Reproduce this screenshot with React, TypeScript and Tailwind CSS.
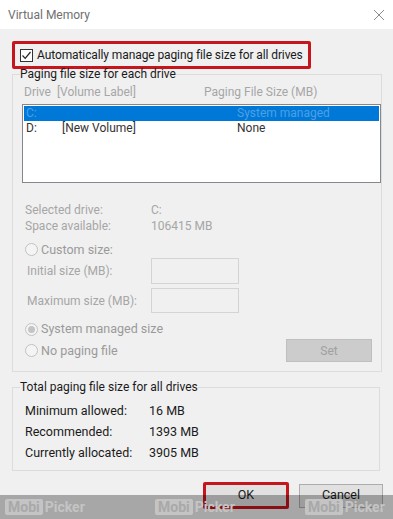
import React from "react";

const Radio = ({ checked = false }: { checked?: boolean }) => (
  <span className="w-[13px] h-[13px] rounded-full border border-[#c2c2c2] bg-[#f4f4f4] flex items-center justify-center shrink-0">
    {checked && <span className="w-[7px] h-[7px] rounded-full bg-[#c4c4c4]" />}
  </span>
);

const Logo = () => (
  <div className="w-[150px] shrink-0 flex items-center whitespace-nowrap">
    <span className="bg-[#c4c4c4] text-[#a9a9a9] font-bold text-[14px] leading-[16px] px-[3px] rounded-[2px]">Mobi</span>
    <span className="text-[#c4c4c4] font-bold text-[14px] leading-[16px] ml-[2px]">Picker</span>
  </div>
);

export default function App() {
  return (
    <div
      className="relative w-[393px] h-[519px] bg-[#f0f0f0] overflow-hidden text-[12px] text-[#1a1a1a]"
      style={{ fontFamily: 'Roboto, "Noto Sans", sans-serif' }}
    >
      {/* Title bar */}
      <div className="h-[29px] bg-white flex items-center justify-between pl-[8px] pr-[7px]">
        <span className="text-[12px] text-[#707070]">Virtual Memory</span>
        <svg width="14" height="14" viewBox="0 0 14 14">
          <path d="M2 2 L12 12 M12 2 L2 12" stroke="#8a8a8a" strokeWidth="1" fill="none" />
        </svg>
      </div>

      {/* Red highlighted checkbox */}
      <div className="mt-[12px] ml-[12px] w-[299px] h-[28px] border-[3px] border-[#c5161d] rounded-[2px] flex items-center pl-[5px]">
        <span className="w-[13px] h-[13px] border border-[#333] bg-white flex items-center justify-center shrink-0">
          <svg width="11" height="11" viewBox="0 0 11 11">
            <path d="M1.5 5.5 L4.2 8.3 L9.5 2" stroke="#222" strokeWidth="1.2" fill="none" />
          </svg>
        </span>
        <span className="ml-[4px] text-[12px] tracking-[-0.1px] leading-[16px] whitespace-nowrap">
          Automatically manage paging file size for all drives
        </span>
      </div>

      {/* Group 1 */}
      <fieldset className="-mt-[2px] ml-[12px] w-[368px] h-[305px] border border-[#dcdcdc] px-0">
        <legend className="ml-[7px] text-[12px] leading-[14px] px-0">Paging file size for each drive</legend>
        <div className="mt-[3px] h-[16px] leading-[16px] flex text-[#a6a6a6] pl-[11px]">
          <span className="w-[180px]">Drive&nbsp;&nbsp;[Volume Label]</span>
          <span>Paging File Size (MB)</span>
        </div>
        <div className="mt-[4px] ml-[9px] w-[359px] h-[79px] bg-white border border-[#828790] p-[1px]">
          <div className="h-[15px] bg-[#0078d7] flex items-center text-[#4da0e6] leading-[15px]">
            <span className="w-[213px] pl-[2px]">C:</span>
            <span>System managed</span>
          </div>
          <div className="h-[15px] flex items-center leading-[15px] text-[#333]">
            <span className="w-[38px] pl-[2px]">D:</span>
            <span className="w-[175px]">[New Volume]</span>
            <span>None</span>
          </div>
        </div>

        <div className="text-[#a6a6a6] pl-[12px]">
          <div className="mt-[19px] h-[16px] leading-[16px] flex">
            <span className="w-[126px]">Selected drive:</span>
            <span>C:</span>
          </div>
          <div className="h-[16px] leading-[16px] flex">
            <span className="w-[126px]">Space available:</span>
            <span>106415 MB</span>
          </div>
        </div>

        <div className="mt-[8px] pl-[12px] h-[15px] flex items-center gap-[3px] text-[12.5px] text-[#9a9a9a]">
          <Radio />
          <span className="leading-[15px]">Custom size:</span>
        </div>
        <div className="mt-[1px] pl-[14px] flex items-center text-[#a6a6a6]">
          <span className="w-[124px]">Initial size (MB):</span>
          <span className="w-[88px] h-[26px] border border-[#d4d4d4] bg-[#f0f0f0]" />
        </div>
        <div className="mt-[4px] pl-[14px] flex items-center text-[#a6a6a6]">
          <span className="w-[124px]">Maximum size (MB):</span>
          <span className="w-[88px] h-[25px] border border-[#d4d4d4] bg-[#f0f0f0]" />
        </div>

        <div className="mt-[8px] pl-[12px] h-[16px] flex items-center gap-[3px] text-[12.5px] text-[#9a9a9a]">
          <Radio checked />
          <span className="leading-[16px]">System managed size</span>
        </div>
        <div className="mt-[2px] pl-[12px] pr-[9px] flex items-center justify-between text-[12.5px] text-[#9a9a9a]">
          <div className="flex items-center gap-[3px]">
            <Radio />
            <span className="leading-[16px]">No paging file</span>
          </div>
          <div className="w-[86px] h-[23px] bg-[#cccccc] border border-[#bfbfbf] flex items-center justify-center text-[12px] text-[#a0a0a0]">
            Set
          </div>
        </div>
      </fieldset>

      {/* Group 2 */}
      <fieldset className="mt-[7px] ml-[12px] w-[368px] h-[92px] border border-[#dcdcdc] px-0">
        <legend className="ml-[7px] text-[12px] leading-[16px] px-0">Total paging file size for all drives</legend>
        <div className="pl-[12px] text-[12.5px] text-[#1a1a1a]">
          <div className="mt-[5px] h-[21px] leading-[21px] flex">
            <span className="w-[124px]">Minimum allowed:</span>
            <span>16 MB</span>
          </div>
          <div className="h-[21px] leading-[21px] flex">
            <span className="w-[124px]">Recommended:</span>
            <span>1393 MB</span>
          </div>
          <div className="h-[21px] leading-[21px] flex">
            <span className="w-[124px]">Currently allocated:</span>
            <span>3905 MB</span>
          </div>
        </div>
      </fieldset>

      {/* Buttons */}
      <div className="mt-[11px] flex items-center pl-[203px]">
        <div className="w-[86px] h-[27px] border-[3px] border-[#c5161d] rounded-[2px] bg-[#e1e1e1] flex items-center justify-center text-[12.5px]">
          OK
        </div>
        <div className="ml-[10px] w-[84px] h-[24px] border border-[#adadad] bg-[#e1e1e1] flex items-center justify-center text-[12.5px]">
          Cancel
        </div>
      </div>

      {/* Watermark band */}
      <div className="absolute left-0 bottom-0 w-full h-[24px] bg-black/30 flex items-center pl-[5px]">
        <Logo />
        <Logo />
        <Logo />
      </div>
    </div>
  );
}
